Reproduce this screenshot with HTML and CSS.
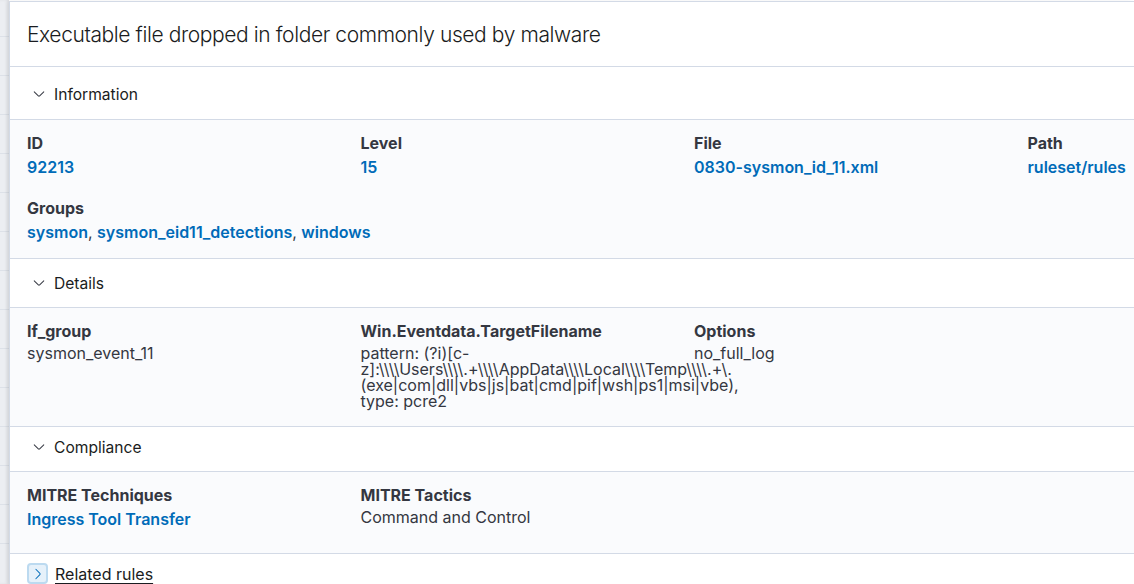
FILE: index.html
```html
<!DOCTYPE html>
<html lang="en">
<head>
  <meta charset="UTF-8">
  <title>Rule details</title>
  <link rel="stylesheet" href="styles.css">
</head>
<body>
  <div class="page">
    <div class="backdrop"></div>

    <div class="flyout">
      <header class="flyout-header">
        <h2>Executable file dropped in folder commonly used by malware</h2>
      </header>

      <!-- Information -->
      <section class="accordion">
        <div class="accordion-toggle toggle-lg">
          <svg class="chevron" viewBox="0 0 16 16" width="16" height="16"><path d="M13.069 5.157L8.384 9.768a.546.546 0 01-.768 0L2.93 5.158a.552.552 0 00-.771 0 .53.53 0 000 .759l4.684 4.61a1.65 1.65 0 002.312 0l4.684-4.61a.53.53 0 000-.76.552.552 0 00-.771 0z"/></svg>
          <span>Information</span>
        </div>
        <div class="accordion-body">
          <div class="fields">
            <div class="field">
              <div class="field-label">ID</div>
              <div class="field-value"><a class="field-link" href="#">92213</a></div>
            </div>
            <div class="field">
              <div class="field-label">Level</div>
              <div class="field-value"><a class="field-link" href="#">15</a></div>
            </div>
            <div class="field">
              <div class="field-label">File</div>
              <div class="field-value"><a class="field-link" href="#">0830-sysmon_id_11.xml</a></div>
            </div>
            <div class="field">
              <div class="field-label">Path</div>
              <div class="field-value"><a class="field-link" href="#">ruleset/rules</a></div>
            </div>
            <div class="field field-wide">
              <div class="field-label">Groups</div>
              <div class="field-value"><a class="field-link" href="#">sysmon</a>, <a class="field-link" href="#">sysmon_eid11_detections</a>, <a class="field-link" href="#">windows</a></div>
            </div>
          </div>
        </div>
      </section>

      <!-- Details -->
      <section class="accordion">
        <div class="accordion-toggle toggle-md">
          <svg class="chevron" viewBox="0 0 16 16" width="16" height="16"><path d="M13.069 5.157L8.384 9.768a.546.546 0 01-.768 0L2.93 5.158a.552.552 0 00-.771 0 .53.53 0 000 .759l4.684 4.61a1.65 1.65 0 002.312 0l4.684-4.61a.53.53 0 000-.76.552.552 0 00-.771 0z"/></svg>
          <span>Details</span>
        </div>
        <div class="accordion-body body-details">
          <div class="fields">
            <div class="field">
              <div class="field-label">If_group</div>
              <div class="field-text">sysmon_event_11</div>
            </div>
            <div class="field">
              <div class="field-label">Win.Eventdata.TargetFilename</div>
              <div class="field-text">pattern: (?i)[c-<br>z]:\\\\Users\\\\.+\\\\AppData\\\\Local\\\\Temp\\\\.+\.<br>(exe|com|dll|vbs|js|bat|cmd|pif|wsh|ps1|msi|vbe),<br>type: pcre2</div>
            </div>
            <div class="field">
              <div class="field-label">Options</div>
              <div class="field-text">no_full_log</div>
            </div>
          </div>
        </div>
      </section>

      <!-- Compliance -->
      <section class="accordion">
        <div class="accordion-toggle toggle-sm">
          <svg class="chevron" viewBox="0 0 16 16" width="16" height="16"><path d="M13.069 5.157L8.384 9.768a.546.546 0 01-.768 0L2.93 5.158a.552.552 0 00-.771 0 .53.53 0 000 .759l4.684 4.61a1.65 1.65 0 002.312 0l4.684-4.61a.53.53 0 000-.76.552.552 0 00-.771 0z"/></svg>
          <span>Compliance</span>
        </div>
        <div class="accordion-body body-compliance">
          <div class="fields">
            <div class="field">
              <div class="field-label">MITRE Techniques</div>
              <div class="field-value"><a class="field-link" href="#">Ingress Tool Transfer</a></div>
            </div>
            <div class="field">
              <div class="field-label">MITRE Tactics</div>
              <div class="field-text">Command and Control</div>
            </div>
          </div>
        </div>
      </section>

      <div class="related">
        <span class="related-icon">
          <svg viewBox="0 0 16 16" width="14" height="14"><path d="M5.157 13.069l4.611-4.685a.546.546 0 000-.768L5.158 2.93a.552.552 0 010-.771.53.53 0 01.759 0l4.61 4.684a1.65 1.65 0 010 2.312l-4.61 4.684a.53.53 0 01-.76 0 .552.552 0 010-.771z"/></svg>
        </span>
        <span class="related-text">Related rules</span>
      </div>
    </div>
  </div>
</body>
</html>
```

FILE: styles.css
```css
html, body {
  margin: 0;
  height: 100%;
  overflow: hidden;
}
body {
  background: #fff;
  font-family: Inter, "Noto Sans", sans-serif;
  color: #343741;
}
.page {
  display: flex;
  height: 100%;
}
.backdrop {
  flex: 0 0 9px;
  background-color: #eceef2;
  background-image: repeating-linear-gradient(to bottom, transparent 0, transparent 38px, #dde1e8 38px, #dde1e8 39px);
  background-position: 0 -2px;
  box-shadow: inset -2px 0 3px rgba(0,0,0,0.06);
}
.flyout {
  flex: 1;
  min-width: 0;
  margin-top: 1px;
  border-top: 1px solid #d3dae6;
  border-left: 1px solid #d3dae6;
  background: #fff;
  box-shadow: -2px 0 4px rgba(0,0,0,0.06);
}
.flyout-header {
  height: 64px;
  display: flex;
  align-items: center;
  padding-left: 17px;
  border-bottom: 1px solid #d3dae6;
}
.flyout-header h2 {
  margin: 0;
  font-size: 21px;
  font-weight: 300;
  letter-spacing: -0.4px;
  color: #1a1c21;
  white-space: nowrap;
}
.accordion-toggle {
  display: flex;
  align-items: center;
  gap: 7px;
  padding-left: 21px;
  font-size: 15.6px;
  color: #1a1c21;
  border-bottom: 1px solid #d3dae6;
}
.toggle-lg { height: 50px; padding-top: 2px; }
.toggle-md { height: 48px; }
.toggle-sm { height: 40px; padding-bottom: 4px; }
.chevron {
  fill: #343741;
  width: 14px;
  height: 14px;
  margin: 0 1px;
}
.accordion-body {
  background: #fafbfd;
  padding: 13px 0 16px 17px;
  border-bottom: 1px solid #d3dae6;
}
.body-details { padding-bottom: 17px; }
.body-compliance { padding-bottom: 24px; }
.fields {
  display: grid;
  grid-template-columns: repeat(4, 333.5px);
  row-gap: 21px;
}
.field-wide {
  grid-column: 1 / -1;
}
.field-label {
  font-size: 16px;
  font-weight: 700;
  line-height: 20px;
  color: #343741;
  margin-bottom: 4px;
  white-space: nowrap;
}
.field-value {
  font-size: 16px;
  line-height: 20px;
  height: 20px;
  white-space: nowrap;
}
.field-link {
  font-weight: 600;
  color: #006bb8;
  text-decoration: none;
}
.field-text {
  font-size: 16px;
  line-height: 16px;
  color: #343741;
  white-space: nowrap;
}
.related {
  display: flex;
  align-items: center;
  gap: 7px;
  padding: 9px 0 0 17px;
}
.related-icon {
  width: 17px;
  height: 17px;
  border: 2px solid #bcdaf0;
  border-radius: 4px;
  background: #e6f1fa;
  display: flex;
  align-items: center;
  justify-content: center;
}
.related-icon svg {
  fill: #006bb8;
}
.related-text {
  font-size: 16px;
  color: #1a1c21;
  text-decoration: underline;
  text-underline-offset: 3px;
}
```
